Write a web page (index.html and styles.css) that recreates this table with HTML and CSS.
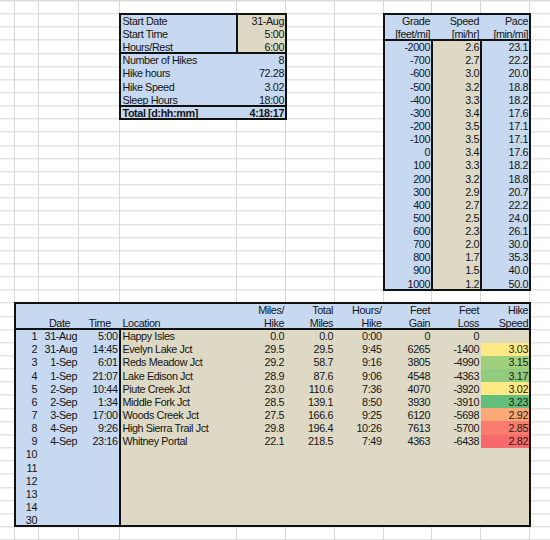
FILE: index.html
```html
<!DOCTYPE html>
<html lang="en">
<head>
  <meta charset="UTF-8">
  <title>JMT Hike Planner</title>
  <link rel="stylesheet" href="styles.css">
</head>
<body>

  <div class="sheet">

    <!-- trip summary -->
    <section class="summary">
      <div class="lbl">Start Date</div><div class="val input">31-Aug</div>
      <div class="lbl">Start Time</div><div class="val input">5:00</div>
      <div class="lbl">Hours/Rest</div><div class="val input">6:00</div>
      <div class="lbl split">Number of Hikes</div><div class="val split">8</div>
      <div class="lbl">Hike hours</div><div class="val">72.28</div>
      <div class="lbl">Hike Speed</div><div class="val">3.02</div>
      <div class="lbl">Sleep Hours</div><div class="val">18:00</div>
      <div class="lbl split total">Total [d:hh:mm]</div><div class="val split total">4:18:17</div>
    </section>

    <!-- speed by grade lookup -->
    <section class="rates">
      <div class="rates-head">
        <span>Grade<br>[feet/mi]</span>
        <span>Speed<br>[mi/hr]</span>
        <span>Pace<br>[min/mi]</span>
      </div>
      <div class="rates-body">
        <div class="col grade">
          <span>-2000</span><span>-700</span><span>-600</span><span>-500</span><span>-400</span>
          <span>-300</span><span>-200</span><span>-100</span><span>0</span><span>100</span>
          <span>200</span><span>300</span><span>400</span><span>500</span><span>600</span>
          <span>700</span><span>800</span><span>900</span><span>1000</span>
        </div>
        <div class="col speed">
          <span>2.6</span><span>2.7</span><span>3.0</span><span>3.2</span><span>3.3</span>
          <span>3.4</span><span>3.5</span><span>3.5</span><span>3.4</span><span>3.3</span>
          <span>3.2</span><span>2.9</span><span>2.7</span><span>2.5</span><span>2.3</span>
          <span>2.0</span><span>1.7</span><span>1.5</span><span>1.2</span>
        </div>
        <div class="col pace">
          <span>23.1</span><span>22.2</span><span>20.0</span><span>18.8</span><span>18.2</span>
          <span>17.6</span><span>17.1</span><span>17.1</span><span>17.6</span><span>18.2</span>
          <span>18.8</span><span>20.7</span><span>22.2</span><span>24.0</span><span>26.1</span>
          <span>30.0</span><span>35.3</span><span>40.0</span><span>50.0</span>
        </div>
      </div>
    </section>

    <!-- hike legs -->
    <section class="legs">
      <div class="legs-head">
        <div class="row"><span></span><span></span><span></span><span></span><span>Miles/</span><span>Total</span><span>Hours/</span><span>Feet</span><span>Feet</span><span>Hike</span></div>
        <div class="row"><span></span><span class="mid">Date</span><span class="mid">Time</span><span class="left">Location</span><span>Hike</span><span>Miles</span><span>Hike</span><span>Gain</span><span>Loss</span><span>Speed</span></div>
      </div>
      <div class="legs-body">
        <div class="row"><span>1</span><span>31-Aug</span><span>5:00</span><span class="loc">Happy Isles</span><span>0.0</span><span>0.0</span><span>0:00</span><span>0</span><span>0</span><span></span></div>
        <div class="row"><span>2</span><span>31-Aug</span><span>14:45</span><span class="loc">Evelyn Lake Jct</span><span>29.5</span><span>29.5</span><span>9:45</span><span>6265</span><span>-1400</span><span class="heat yellow">3.03</span></div>
        <div class="row"><span>3</span><span>1-Sep</span><span>6:01</span><span class="loc">Reds Meadow Jct</span><span>29.2</span><span>58.7</span><span>9:16</span><span>3805</span><span>-4990</span><span class="heat green-lt">3.15</span></div>
        <div class="row"><span>4</span><span>1-Sep</span><span>21:07</span><span class="loc">Lake Edison Jct</span><span>28.9</span><span>87.6</span><span>9:06</span><span>4548</span><span>-4363</span><span class="heat green-md">3.17</span></div>
        <div class="row"><span>5</span><span>2-Sep</span><span>10:44</span><span class="loc">Piute Creek Jct</span><span>23.0</span><span>110.6</span><span>7:36</span><span>4070</span><span>-3920</span><span class="heat yellow">3.02</span></div>
        <div class="row"><span>6</span><span>2-Sep</span><span>1:34</span><span class="loc">Middle Fork Jct</span><span>28.5</span><span>139.1</span><span>8:50</span><span>3930</span><span>-3910</span><span class="heat green">3.23</span></div>
        <div class="row"><span>7</span><span>3-Sep</span><span>17:00</span><span class="loc">Woods Creek Jct</span><span>27.5</span><span>166.6</span><span>9:25</span><span>6120</span><span>-5698</span><span class="heat orange">2.92</span></div>
        <div class="row"><span>8</span><span>4-Sep</span><span>9:26</span><span class="loc">High Sierra Trail Jct</span><span>29.8</span><span>196.4</span><span>10:26</span><span>7613</span><span>-5700</span><span class="heat red-lt">2.85</span></div>
        <div class="row"><span>9</span><span>4-Sep</span><span>23:16</span><span class="loc">Whitney Portal</span><span>22.1</span><span>218.5</span><span>7:49</span><span>4363</span><span>-6438</span><span class="heat red">2.82</span></div>
        <div class="row"><span>10</span><span></span><span></span><span class="loc"></span><span></span><span></span><span></span><span></span><span></span><span></span></div>
        <div class="row"><span>11</span><span></span><span></span><span class="loc"></span><span></span><span></span><span></span><span></span><span></span><span></span></div>
        <div class="row"><span>12</span><span></span><span></span><span class="loc"></span><span></span><span></span><span></span><span></span><span></span><span></span></div>
        <div class="row"><span>13</span><span></span><span></span><span class="loc"></span><span></span><span></span><span></span><span></span><span></span><span></span></div>
        <div class="row"><span>14</span><span></span><span></span><span class="loc"></span><span></span><span></span><span></span><span></span><span></span><span></span></div>
        <div class="row"><span>30</span><span></span><span></span><span class="loc"></span><span></span><span></span><span></span><span></span><span></span><span></span></div>
      </div>
    </section>

  </div>

</body>
</html>
```

FILE: styles.css
```css
html, body {
  margin: 0;
  overflow: hidden;
}

body {
  font-family: "Liberation Sans", Arial, sans-serif;
  font-size: 10.8px;
  letter-spacing: -0.4px;
  color: #141414;
  background: #fff;
}

/* worksheet with its gridlines */
.sheet {
  display: grid;
  grid-template-columns: 15px 24px 40px 40.5px 117.5px 49px 49px 48.5px 48.5px 49px 49px 1fr;
  grid-template-rows: 14px repeat(41, 13.15px);
  height: 540px;
  overflow: hidden;
  background-image:
    linear-gradient(to right,
      transparent 14.5px, #d8d8d8 14.5px 15.5px,
      transparent 15.5px 38.5px, #d8d8d8 38.5px 39.5px,
      transparent 39.5px 78.5px, #d8d8d8 78.5px 79.5px,
      transparent 79.5px 119px, #d8d8d8 119px 120px,
      transparent 120px 236.5px, #d8d8d8 236.5px 237.5px,
      transparent 237.5px 285.5px, #d8d8d8 285.5px 286.5px,
      transparent 286.5px 334.5px, #d8d8d8 334.5px 335.5px,
      transparent 335.5px 383px, #d8d8d8 383px 384px,
      transparent 384px 431.5px, #d8d8d8 431.5px 432.5px,
      transparent 432.5px 480.5px, #d8d8d8 480.5px 481.5px,
      transparent 481.5px 529.5px, #d8d8d8 529.5px 530.5px,
      transparent 530.5px),
    repeating-linear-gradient(to bottom, #d8d8d8 0 1px, transparent 1px 13.15px);
  background-position: 0 0, 0 0.35px;
}

/* cells: text sits low in the row, like excel */
.sheet span,
.sheet .lbl,
.sheet .val {
  display: block;
  box-sizing: border-box;
  height: 13.15px;
  line-height: 13.15px;
  padding: 0.8px 2px 0 3px;
  white-space: nowrap;
  text-align: right;
}

/* summary box */
.summary {
  grid-column: 5 / 7;
  grid-row: 2 / 10;
  display: grid;
  grid-template-columns: 117.5px 49px;
  grid-auto-rows: 13.15px;
  background: #c6d9f1;
  outline: 2px solid #111;
  outline-offset: -1px;
}

.summary .lbl {
  text-align: left;
}

.summary .input {
  background: #ddd9c4;
  box-shadow: -1px 0 0 #111, inset 1px 0 0 #111;
}

.summary .split {
  box-shadow: 0 -1px 0 #111, inset 0 1px 0 #111;
}

.summary .total {
  font-weight: bold;
}

/* grade lookup */
.rates {
  grid-column: 9 / 12;
  grid-row: 2 / 23;
  display: flex;
  flex-direction: column;
  background: #c6d9f1;
  outline: 2px solid #111;
  outline-offset: -1px;
}

.rates-head,
.rates-body {
  display: grid;
  grid-template-columns: 48.5px 49px 49px;
}

.rates .rates-head span {
  height: 26.3px;
}

.rates-body {
  box-shadow: 0 -1px 0 #111, inset 0 1px 0 #111;
}

.rates .speed {
  background: #ddd9c4;
  box-shadow: -1px 0 0 #111, inset 1px 0 0 #111,
              1px 0 0 #111, inset -1px 0 0 #111,
              inset 0 1px 0 #111;
}

/* legs table */
.legs {
  grid-column: 2 / 12;
  grid-row: 24 / 41;
  background: #c6d9f1;
  outline: 2px solid #111;
  outline-offset: -1px;
}

.legs .row {
  display: grid;
  grid-template-columns: 24px 40px 40.5px 117.5px 49px 49px 48.5px 48.5px 49px 49px;
}

.legs .mid {
  text-align: center;
}

.legs .left,
.legs .loc {
  text-align: left;
}

.legs-body {
  background: linear-gradient(to right, #c6d9f1 104.5px, #ddd9c4 104.5px);
  box-shadow: 0 -1px 0 #111, inset 0 1px 0 #111;
}

.legs-body .loc {
  box-shadow: -1px 0 0 #111, inset 1px 0 0 #111;
}

.heat { color: #2a1a10; }
.heat.yellow { background: #ffe984; }
.heat.green-lt { background: #a0d07e; }
.heat.green-md { background: #91cb7e; }
.heat.green { background: #63be7b; }
.heat.orange { background: #fba877; }
.heat.red-lt { background: #f97c6f; }
.heat.red { background: #f8696b; }
```
